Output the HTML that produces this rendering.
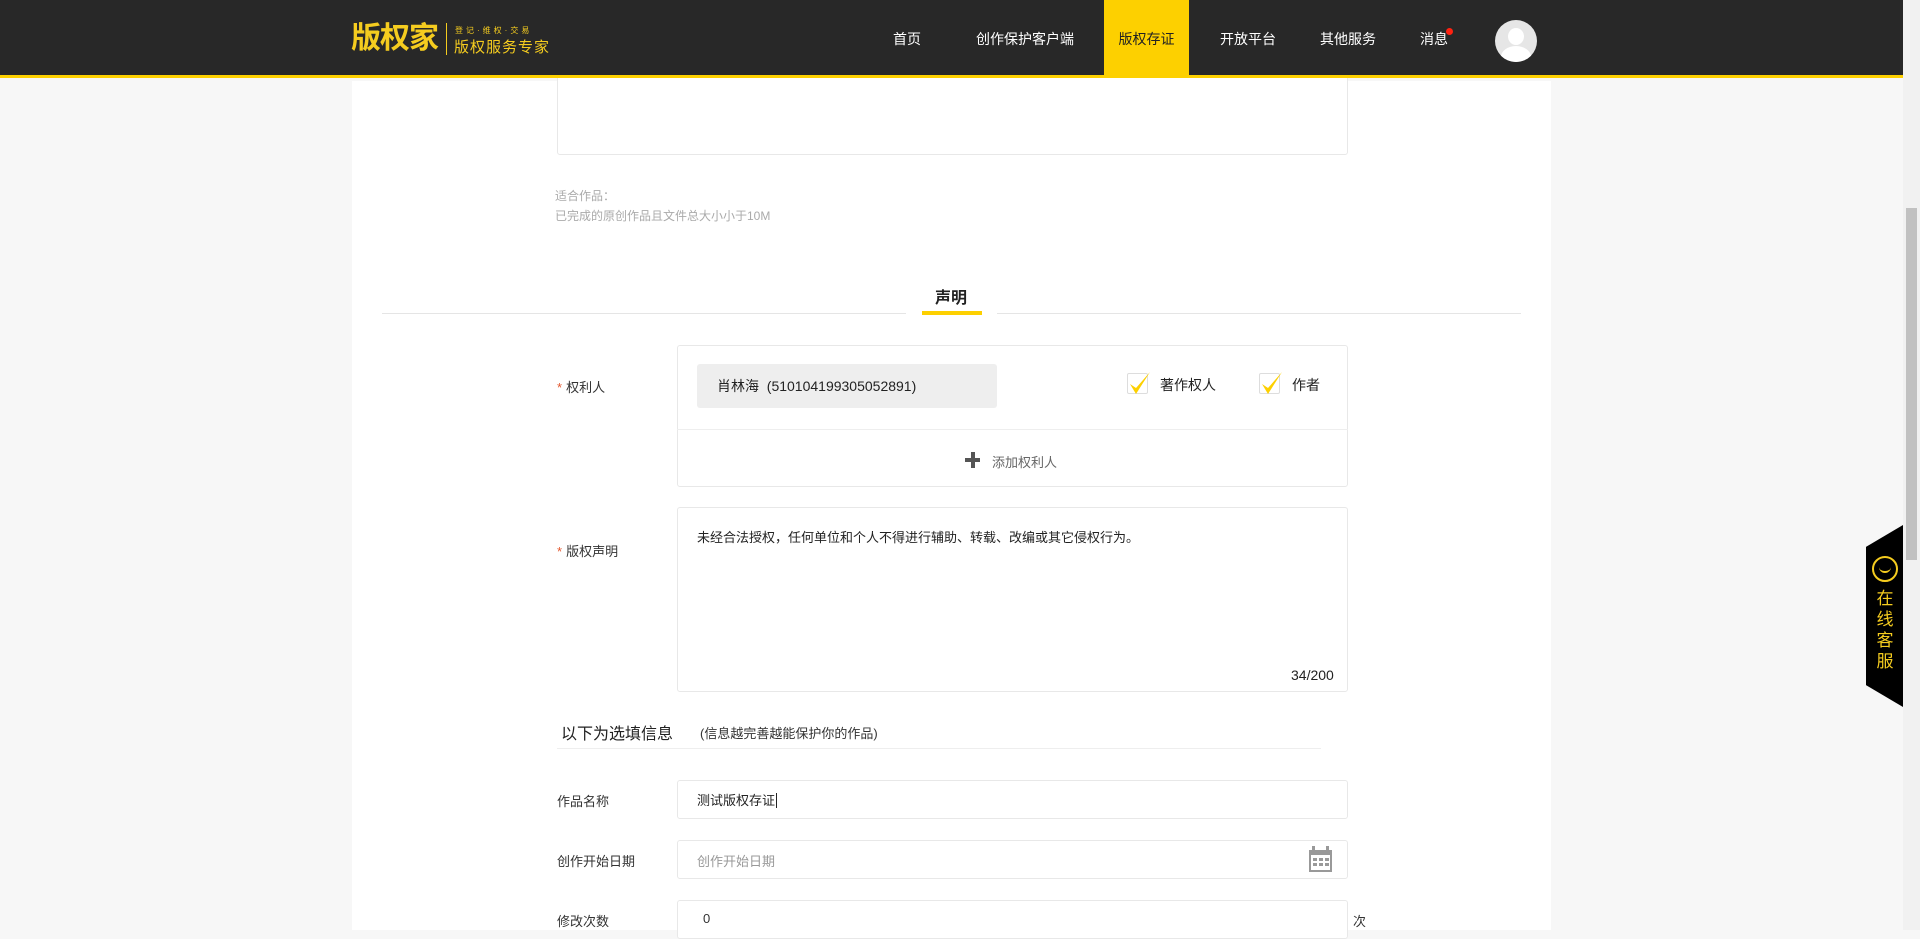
<!DOCTYPE html>
<html><head><meta charset="utf-8"><style>
*{margin:0;padding:0;box-sizing:border-box}
body{width:1920px;height:930px;overflow:hidden;background:#f7f7f7;font-family:"Liberation Sans","Noto Sans CJK SC",sans-serif;color:#333;position:relative;font-size:14px}
.a{position:absolute}
.hdr{left:0;top:0;width:1903px;height:78px;background:#282828;border-bottom:3px solid #fdd000;z-index:5}
.z{z-index:6}
.nav{top:0;height:78px;line-height:78px;color:#fff;font-size:14px;z-index:6}
.panel{left:352px;top:81px;width:1199px;height:849px;background:#fff}
.box{border:1px solid #e8e8e8;border-radius:3px;background:#fff}
.lbl{font-size:13px;color:#333}
.star{color:#e4572e;margin-right:4px}
.chk{width:21px;height:21px;border:1px solid #ddd;border-radius:2px;background:#fff}
</style></head><body>
<div class="a hdr"></div>
<div class="a z" style="left:351px;top:22px;font-size:30px;font-weight:bold;color:#f5cc1f;line-height:34px;letter-spacing:-1px">版权家</div>
<div class="a z" style="left:446px;top:23px;width:1px;height:32px;background:#f5cc1f"></div>
<div class="a z" style="left:455px;top:25px;font-size:8px;color:#f5cc1f;letter-spacing:3px;white-space:nowrap">登记·维权·交易</div>
<div class="a z" style="left:454px;top:36px;font-size:15px;color:#f5cc1f;letter-spacing:1px;white-space:nowrap">版权服务专家</div>
<div class="a nav" style="left:893px">首页</div>
<div class="a nav" style="left:976px">创作保护客户端</div>
<div class="a nav" style="left:1104px;width:85px;background:#fdd000;color:#222;text-align:center">版权存证</div>
<div class="a nav" style="left:1220px">开放平台</div>
<div class="a nav" style="left:1320px">其他服务</div>
<div class="a nav" style="left:1420px">消息</div>
<div class="a z" style="left:1446px;top:28px;width:7px;height:7px;border-radius:50%;background:#f21"></div>
<div class="a z" style="left:1495px;top:20px;width:42px;height:42px;border-radius:50%;background:#e6e6e6;overflow:hidden"><div class="a" style="left:13px;top:8px;width:16px;height:17px;border-radius:50%;background:#fff"></div><div class="a" style="left:6px;top:26px;width:30px;height:22px;border-radius:50% 50% 0 0;background:#fff"></div></div>
<div class="a" style="left:1903px;top:0;width:17px;height:930px;background:#f1f1f1;z-index:7"></div>
<div class="a" style="left:1906px;top:208px;width:11px;height:352px;background:#c1c1c1;z-index:8"></div>

<div class="a panel"></div>
<div class="a box" style="left:557px;top:70px;width:791px;height:85px"></div>
<div class="a" style="left:555px;top:186px;font-size:12px;color:#aaa;line-height:20px">适合作品：<br>已完成的原创作品且文件总大小小于10M</div>
<div class="a" style="left:382px;top:313px;width:524px;height:1px;background:#e5e5e5"></div>
<div class="a" style="left:997px;top:313px;width:524px;height:1px;background:#e5e5e5"></div>
<div class="a" style="left:935px;top:284px;font-size:16px;font-weight:bold;color:#222">声明</div>
<div class="a" style="left:922px;top:311px;width:60px;height:4px;background:#fdd000"></div>

<div class="a lbl" style="left:557px;top:377px"><span class="star">*</span>权利人</div>
<div class="a box" style="left:677px;top:345px;width:671px;height:142px"></div>
<div class="a" style="left:677px;top:429px;width:671px;height:1px;background:#eee"></div>
<div class="a" style="left:697px;top:364px;width:300px;height:44px;background:#eee;border-radius:3px;line-height:44px;padding-left:20px;font-size:14px;color:#222">肖林海 &nbsp;(510104199305052891)</div>
<div class="a chk" style="left:1127px;top:373px"></div>
<svg class="a" style="left:1128px;top:370px" width="24" height="26" viewBox="0 0 24 26"><path d="M2 14 L8 24 L22 2 L8 18 Z" fill="#fdd000"/></svg>
<div class="a" style="left:1160px;top:375px;font-size:14px;color:#222">著作权人</div>
<div class="a chk" style="left:1259px;top:373px"></div>
<svg class="a" style="left:1260px;top:370px" width="24" height="26" viewBox="0 0 24 26"><path d="M2 14 L8 24 L22 2 L8 18 Z" fill="#fdd000"/></svg>
<div class="a" style="left:1292px;top:375px;font-size:14px;color:#222">作者</div>
<div class="a" style="left:965px;top:458px;width:15px;height:4px;background:#555"></div>
<div class="a" style="left:971px;top:452px;width:4px;height:16px;background:#555"></div>
<div class="a" style="left:992px;top:452px;font-size:13px;color:#666">添加权利人</div>

<div class="a lbl" style="left:557px;top:541px"><span class="star">*</span>版权声明</div>
<div class="a box" style="left:677px;top:507px;width:671px;height:185px"></div>
<div class="a" style="left:697px;top:527px;font-size:13px;color:#222">未经合法授权，任何单位和个人不得进行辅助、转载、改编或其它侵权行为。</div>
<div class="a" style="left:1291px;top:667px;font-size:14px;color:#222">34/200</div>

<div class="a" style="left:561px;top:720px;font-size:16px;color:#222">以下为选填信息</div>
<div class="a" style="left:700px;top:723px;font-size:13px;color:#333">(信息越完善越能保护你的作品)</div>
<div class="a" style="left:557px;top:748px;width:764px;height:1px;background:#eee"></div>

<div class="a lbl" style="left:557px;top:791px">作品名称</div>
<div class="a box" style="left:677px;top:780px;width:671px;height:39px"></div>
<div class="a" style="left:697px;top:790px;font-size:13px;color:#222">测试版权存证<span style="border-left:1px solid #222;margin-left:1px"></span></div>
<div class="a lbl" style="left:557px;top:851px">创作开始日期</div>
<div class="a box" style="left:677px;top:840px;width:671px;height:39px"></div>
<div class="a" style="left:697px;top:851px;font-size:13px;color:#999">创作开始日期</div>
<svg class="a" style="left:1308px;top:846px" width="25" height="27" viewBox="0 0 25 27"><rect x="1" y="4" width="23" height="22" fill="#999"/><rect x="4" y="0" width="3" height="7" fill="#999"/><rect x="18" y="0" width="3" height="7" fill="#999"/><rect x="3" y="9" width="19" height="15" fill="#fff"/><g fill="#999"><rect x="5" y="12" width="4" height="3"/><rect x="11" y="12" width="4" height="3"/><rect x="17" y="12" width="4" height="3"/><rect x="5" y="17" width="4" height="3"/><rect x="11" y="17" width="4" height="3"/><rect x="17" y="17" width="4" height="3"/></g></svg>
<div class="a lbl" style="left:557px;top:911px">修改次数</div>
<div class="a box" style="left:677px;top:900px;width:671px;height:39px"></div>
<div class="a" style="left:703px;top:911px;font-size:13px;color:#333">0</div>
<div class="a" style="left:1353px;top:911px;font-size:13px;color:#333">次</div>

<div class="a" style="left:1866px;top:525px;width:37px;height:182px;background:#000;clip-path:polygon(0 12%,100% 0,100% 100%,0 88%)"></div>
<div class="a" style="left:1872px;top:556px;width:26px;height:26px;border:2px solid #f5cc1f;border-radius:50%"></div>
<div class="a" style="left:1879px;top:565px;width:12px;height:8px;border-bottom:2px solid #f5cc1f;border-radius:0 0 8px 8px"></div>
<div class="a" style="left:1876px;top:588px;width:18px;font-size:17px;line-height:21px;color:#f5cc1f;text-align:center">在线客服</div>
</body></html>
